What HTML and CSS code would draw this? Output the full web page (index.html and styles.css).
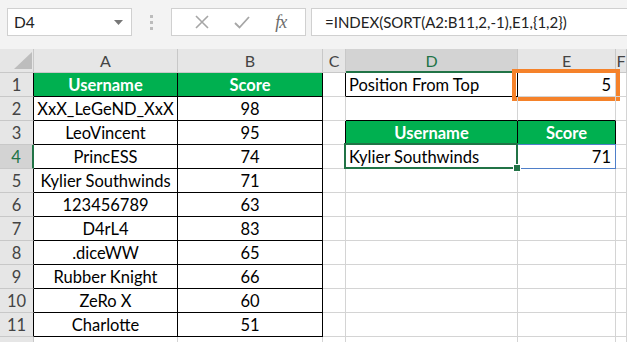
FILE: index.html
```html
<!DOCTYPE html>
<html lang="en">
<head>
  <meta charset="UTF-8" />
  <title>Sheet</title>
  <link rel="stylesheet" href="styles.css">
</head>
<body>

  <div class="toolbar">
    <div class="namebox">
      <span>D4</span>
      <svg class="caret" width="9" height="5" viewBox="0 0 9 5"><path d="M0 0h9L4.5 5z" fill="#777"/></svg>
    </div>
    <div class="dots"><i></i><i></i><i></i></div>
    <div class="fxbtns">
      <svg width="14" height="14" viewBox="0 0 14 14"><path d="M1 1l12 12M13 1L1 13" stroke="#a6a6a6" stroke-width="1.6" fill="none"/></svg>
      <svg width="16" height="13" viewBox="0 0 16 13"><path d="M1 7l4.5 4.5L15 1" stroke="#a6a6a6" stroke-width="1.8" fill="none"/></svg>
      <span class="fx">fx</span>
    </div>
    <div class="formula">=INDEX(SORT(A2:B11,2,-1),E1,{1,2})</div>
  </div>

  <div class="sheet">
    <div class="row head">
      <div class="rh corner"><svg width="18" height="17" viewBox="0 0 18 17"><path d="M18 0v17H0z" fill="#bdbdbd"/></svg></div>
      <div class="ch">A</div><div class="ch">B</div><div class="ch">C</div>
      <div class="ch sel">D</div><div class="ch">E</div><div class="ch">F</div>
    </div>

    <div class="row">
      <div class="rh tl">1</div>
      <div class="c hd bk">Username</div><div class="c hd bk">Score</div>
      <div class="c bkr"></div>
      <div class="c left bk">Position From Top</div>
      <div class="c right pick">5</div>
      <div class="c"></div>
    </div>
    <div class="row">
      <div class="rh tl">2</div>
      <div class="c bk">XxX_LeGeND_XxX</div><div class="c bk">98</div>
      <div class="c"></div><div class="c bkb"></div><div class="c bkb"></div><div class="c"></div>
    </div>
    <div class="row">
      <div class="rh tl">3</div>
      <div class="c bk">LeoVincent</div><div class="c bk">95</div>
      <div class="c bkr"></div>
      <div class="c hd bk">Username</div><div class="c hd bk">Score</div>
      <div class="c"></div>
    </div>
    <div class="row">
      <div class="rh tl on">4</div>
      <div class="c bk">PrincESS</div><div class="c bk">74</div>
      <div class="c"></div>
      <div class="c left active">Kylier Southwinds</div>
      <div class="c right spill">71</div>
      <div class="c"></div>
    </div>
    <div class="row">
      <div class="rh tl">5</div>
      <div class="c bk">Kylier Southwinds</div><div class="c bk">71</div>
      <div class="c"></div><div class="c"></div><div class="c"></div><div class="c"></div>
    </div>
    <div class="row">
      <div class="rh tl">6</div>
      <div class="c bk">123456789</div><div class="c bk">63</div>
      <div class="c"></div><div class="c"></div><div class="c"></div><div class="c"></div>
    </div>
    <div class="row">
      <div class="rh tl">7</div>
      <div class="c bk">D4rL4</div><div class="c bk">83</div>
      <div class="c"></div><div class="c"></div><div class="c"></div><div class="c"></div>
    </div>
    <div class="row">
      <div class="rh tl">8</div>
      <div class="c bk">.diceWW</div><div class="c bk">65</div>
      <div class="c"></div><div class="c"></div><div class="c"></div><div class="c"></div>
    </div>
    <div class="row">
      <div class="rh tl">9</div>
      <div class="c bk">Rubber Knight</div><div class="c bk">66</div>
      <div class="c"></div><div class="c"></div><div class="c"></div><div class="c"></div>
    </div>
    <div class="row">
      <div class="rh tl">10</div>
      <div class="c bk">ZeRo X</div><div class="c bk">60</div>
      <div class="c"></div><div class="c"></div><div class="c"></div><div class="c"></div>
    </div>
    <div class="row">
      <div class="rh tl">11</div>
      <div class="c bk">Charlotte</div><div class="c bk">51</div>
      <div class="c"></div><div class="c"></div><div class="c"></div><div class="c"></div>
    </div>
    <div class="row last">
      <div class="rh"></div>
      <div class="c"></div><div class="c"></div><div class="c"></div>
      <div class="c"></div><div class="c"></div><div class="c"></div>
    </div>
  </div>

</body>
</html>
```

FILE: styles.css
```css
* {
  box-sizing: border-box;
}
body {
  margin: 0;
  width: 627px;
  height: 342px;
  overflow: hidden;
  background: #fff;
  font-family: Lato, 'Open Sans', sans-serif;
  font-size: 16.5px;
  color: #000;
}
.toolbar {
  height: 49px;
  background: #f3f3f3;
  display: flex;
  align-items: flex-start;
  padding-top: 8px;
  padding-left: 7px;
  font-size: 15.5px;
}
.namebox {
  width: 125px;
  height: 28px;
  background: #fff;
  border: 1px solid #d0d0d0;
  display: flex;
  align-items: center;
  justify-content: space-between;
  padding: 0 8px 0 6px;
  color: #222;
}
.dots {
  width: 39px;
  height: 28px;
  display: flex;
  flex-direction: column;
  align-items: center;
  justify-content: center;
  gap: 3px;
}
.dots i {
  width: 3px;
  height: 3px;
  background: #bcbcbc;
}
.fxbtns {
  width: 135px;
  height: 28px;
  background: #fff;
  border: 1px solid #d0d0d0;
  display: flex;
  align-items: center;
  justify-content: space-around;
  padding: 0 6px 0 10px;
}
.fx {
  font-family: 'Liberation Serif', serif;
  font-style: italic;
  font-size: 18px;
  color: #6b6b6b;
  letter-spacing: -1px;
}
.formula {
  flex: 1;
  margin-left: 5px;
  height: 28px;
  background: #fff;
  border: 1px solid #d0d0d0;
  border-right: none;
  padding-left: 13px;
  line-height: 26px;
  color: #222;
  white-space: nowrap;
  font-size: 15px;
}
.row {
  display: grid;
  grid-template-columns: 34px 144px 145px 23px 172px 98px 1fr;
  height: 24px;
}
.row.head {
  background: #e6e6e6;
  font-size: 16px;
}
.row.last {
  height: 6px;
}
.rh, .ch {
  background: #e6e6e6;
  color: #444;
  border-right: 1px solid #c8c8c8;
  border-bottom: 1px solid #c8c8c8;
  display: flex;
  align-items: center;
  justify-content: center;
}
.corner {
  justify-content: flex-end;
  align-items: flex-end;
  padding: 0 1px 3px 0;
}
.ch.sel {
  background: #d3d3d3;
  color: #217346;
  border-bottom: 2px solid #217346;
}
.rh.tl {
  border-right-color: #000;
}
.rh.on {
  background: #d3d3d3;
  color: #217346;
  border-right: 2px solid #217346;
}
.c {
  border-right: 1px solid #d4d4d4;
  border-bottom: 1px solid #d4d4d4;
  display: flex;
  align-items: center;
  justify-content: center;
  white-space: nowrap;
  position: relative;
}
.c.bk {
  border-right-color: #000;
  border-bottom-color: #000;
}
.c.bkr {
  border-right-color: #000;
}
.c.bkb {
  border-bottom-color: #000;
}
.c.hd {
  background: #00b050;
  color: #fff;
  font-weight: bold;
}
.c.left {
  justify-content: flex-start;
  padding-left: 3px;
}
.c.right {
  justify-content: flex-end;
  padding-right: 4px;
}
.pick::after {
  content: "";
  position: absolute;
  top: -4px;
  left: -6px;
  right: -5px;
  bottom: -5px;
  border: 4px solid #f5822a;
}
.spill::after {
  content: "";
  position: absolute;
  top: -1px;
  left: -1px;
  right: -1px;
  bottom: -1px;
  border: 1px solid #4f7fc9;
}
.active::after {
  content: "";
  position: absolute;
  top: -2px;
  left: -2px;
  right: -1px;
  bottom: -1px;
  border: 2px solid #217346;
  z-index: 2;
}
.active::before {
  content: "";
  position: absolute;
  right: -4px;
  bottom: -4px;
  width: 6px;
  height: 6px;
  background: #217346;
  border: 1px solid #fff;
  z-index: 3;
}
```
